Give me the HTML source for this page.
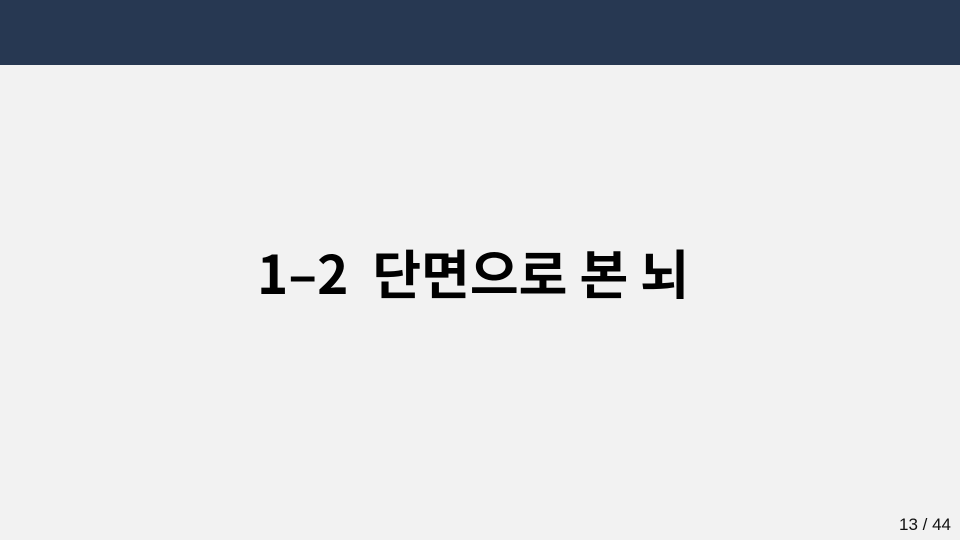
<!DOCTYPE html>
<html><head><meta charset="utf-8"><style>
html,body{margin:0;padding:0}
body{width:960px;height:540px;background:#f2f2f2;position:relative;overflow:hidden;font-family:"Liberation Sans","Noto Sans CJK KR",sans-serif}
.top{position:absolute;left:0;top:0;width:960px;height:65px;background:#273852}
.t{position:absolute;left:0;width:946px;top:236px;text-align:center;font-size:53px;font-weight:bold;color:#000;line-height:72px;white-space:pre;font-family:"Noto Sans CJK KR","Liberation Sans",sans-serif}
.n{position:absolute;right:9px;top:514px;font-size:17px;color:#111;line-height:22px}
</style></head><body>
<div class="top"></div>
<div class="t">1–2  단면으로 본 뇌</div>
<div class="n">13 / 44</div>
</body></html>
